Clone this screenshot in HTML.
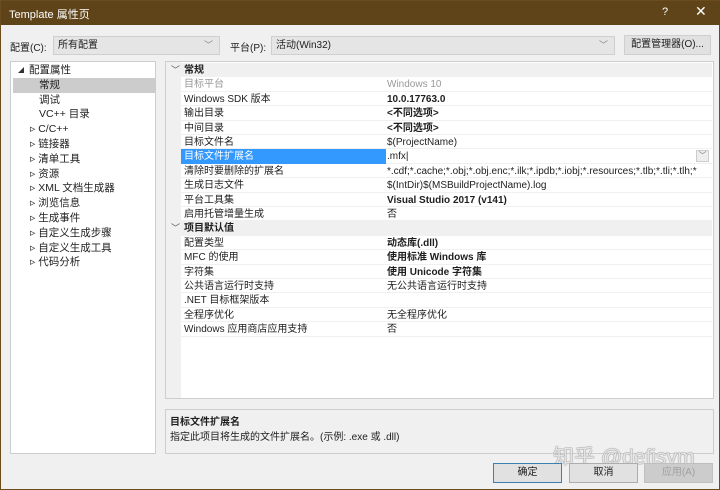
<!DOCTYPE html>
<html><head><meta charset="utf-8"><style>
*{margin:0;padding:0;box-sizing:border-box}
body{width:720px;height:490px;overflow:hidden;background:#f0f0f0;font-family:"Liberation Sans","Noto Sans CJK SC",sans-serif;font-size:10px;color:#1e1e1e;position:relative;border:1px solid #6b4c1e}
.a{position:absolute}
#title{left:0;top:0;width:720px;height:24px;background:#5f4319;color:#fff;font-size:11px}
.combo{background:#e5e5e5;border:1px solid #cfcfcf;height:19px;line-height:17px;padding-left:4px}
.combo .ch{position:absolute;right:6px;top:0;color:#888;font-size:9px}
.panel{background:#fff;border:1px solid #cdcdcd}
.tr{position:absolute;left:0;height:14.8px;line-height:15.5px;white-space:nowrap;width:143px;font-size:10.5px}
.gr{position:absolute;left:0;width:546px;height:14.4px;line-height:15px;white-space:nowrap;border-bottom:1px solid #f0f0f0}
.gr .n{position:absolute;left:18px}
.gr .v{position:absolute;left:221px}
.gr.h{background:#f0f0f0}
.gr .c{position:absolute;left:5px;color:#555;font-size:9px}
.b{font-weight:bold}
.g{color:#999}
.btn{position:absolute;top:462px;width:69px;height:20px;line-height:18px;text-align:center;background:#e1e1e1;border:1px solid #adadad}
.tri{display:inline-block;width:0;height:0;border-left:6px solid transparent;border-bottom:6px solid #333;margin-right:5px}
</style></head><body>
<div id="title" class="a"><span class="a" style="left:8px;top:5px">Template 属性页</span><span class="a" style="left:661px;top:5px">?</span><span class="a" style="left:694px;top:2px;font-size:14px">✕</span></div>
<div class="a" style="left:9px;top:38px">配置(C):</div>
<div class="a combo" style="left:52px;top:35px;width:167px">所有配置<span class="ch">﹀</span></div>
<div class="a" style="left:229px;top:38px">平台(P):</div>
<div class="a combo" style="left:270px;top:35px;width:344px">活动(Win32)<span class="ch">﹀</span></div>
<div class="a" style="left:623px;top:34px;width:87px;height:20px;line-height:18px;text-align:center;background:#e1e1e1;border:1px solid #cfcfcf">配置管理器(O)...</div>

<div class="a panel" style="left:9px;top:60px;width:146px;height:393px">
<div class="tr" style="top:1px;left:7px"><span class="tri"></span>配置属性</div>
<div class="tr" style="top:15.8px;left:2px;background:#cccccc;padding-left:26px">常规</div>
<div class="tr" style="top:30.6px;left:28px">调试</div>
<div class="tr" style="top:45.4px;left:28px">VC++ 目录</div>
<div class="tr" style="top:60.2px;left:19px">▹ C/C++</div>
<div class="tr" style="top:75px;left:19px">▹ 链接器</div>
<div class="tr" style="top:89.8px;left:19px">▹ 清单工具</div>
<div class="tr" style="top:104.6px;left:19px">▹ 资源</div>
<div class="tr" style="top:119.4px;left:19px">▹ XML 文档生成器</div>
<div class="tr" style="top:134.2px;left:19px">▹ 浏览信息</div>
<div class="tr" style="top:149px;left:19px">▹ 生成事件</div>
<div class="tr" style="top:163.8px;left:19px">▹ 自定义生成步骤</div>
<div class="tr" style="top:178.6px;left:19px">▹ 自定义生成工具</div>
<div class="tr" style="top:193.4px;left:19px">▹ 代码分析</div>
</div>

<div class="a panel" style="left:164px;top:60px;width:549px;height:338px;overflow:hidden">
<div class="a" style="left:0;top:0;width:15px;height:338px;background:#f0f0f0"></div>
<div class="gr h" style="top:1px"><span class="c">﹀</span><span class="n b">常规</span></div>
<div class="gr" style="top:15.4px"><span class="n g">目标平台</span><span class="v g">Windows 10</span></div>
<div class="gr" style="top:29.8px"><span class="n">Windows SDK 版本</span><span class="v b">10.0.17763.0</span></div>
<div class="gr" style="top:44.2px"><span class="n">输出目录</span><span class="v b">&lt;不同选项&gt;</span></div>
<div class="gr" style="top:58.6px"><span class="n">中间目录</span><span class="v b">&lt;不同选项&gt;</span></div>
<div class="gr" style="top:73px"><span class="n">目标文件名</span><span class="v">$(ProjectName)</span></div>
<div class="gr" style="top:87.4px"><span class="a" style="left:15px;width:205px;height:14.4px;background:#3399ff"></span><span class="n" style="color:#fff">目标文件扩展名</span><span class="v">.mfx|</span><span class="a" style="right:3px;top:1px;width:13px;height:12px;border:1px solid #ccc;background:#eee;font-size:8px;text-align:center;line-height:10px;color:#777">﹀</span></div>
<div class="gr" style="top:101.8px"><span class="n">清除时要删除的扩展名</span><span class="v">*.cdf;*.cache;*.obj;*.obj.enc;*.ilk;*.ipdb;*.iobj;*.resources;*.tlb;*.tli;*.tlh;*</span></div>
<div class="gr" style="top:116.2px"><span class="n">生成日志文件</span><span class="v">$(IntDir)$(MSBuildProjectName).log</span></div>
<div class="gr" style="top:130.6px"><span class="n">平台工具集</span><span class="v b">Visual Studio 2017 (v141)</span></div>
<div class="gr" style="top:145px"><span class="n">启用托管增量生成</span><span class="v">否</span></div>
<div class="gr h" style="top:159.4px"><span class="c">﹀</span><span class="n b">项目默认值</span></div>
<div class="gr" style="top:173.8px"><span class="n">配置类型</span><span class="v b">动态库(.dll)</span></div>
<div class="gr" style="top:188.2px"><span class="n">MFC 的使用</span><span class="v b">使用标准 Windows 库</span></div>
<div class="gr" style="top:202.6px"><span class="n">字符集</span><span class="v b">使用 Unicode 字符集</span></div>
<div class="gr" style="top:217px"><span class="n">公共语言运行时支持</span><span class="v">无公共语言运行时支持</span></div>
<div class="gr" style="top:231.4px"><span class="n">.NET 目标框架版本</span></div>
<div class="gr" style="top:245.8px"><span class="n">全程序优化</span><span class="v">无全程序优化</span></div>
<div class="gr" style="top:260.2px"><span class="n">Windows 应用商店应用支持</span><span class="v">否</span></div>
</div>

<div class="a" style="left:164px;top:408px;width:549px;height:45px;border:1px solid #cdcdcd;background:#f0f0f0">
<div class="a b" style="left:4px;top:3px">目标文件扩展名</div>
<div class="a" style="left:4px;top:18px">指定此项目将生成的文件扩展名。(示例: .exe 或 .dll)</div>
</div>
<div class="a" style="left:552px;top:440px;font-size:21px;color:rgba(255,255,255,0.8);text-shadow:0 0 1px #777,0 0 1px #777">知乎 @defisym</div>
<div class="btn" style="left:492px;border:1px solid #3c7fb1">确定</div>
<div class="btn" style="left:568px">取消</div>
<div class="btn" style="left:643px;color:#a0a0a0;background:#ccc;border-color:#bfbfbf">应用(A)</div>
</body></html>
